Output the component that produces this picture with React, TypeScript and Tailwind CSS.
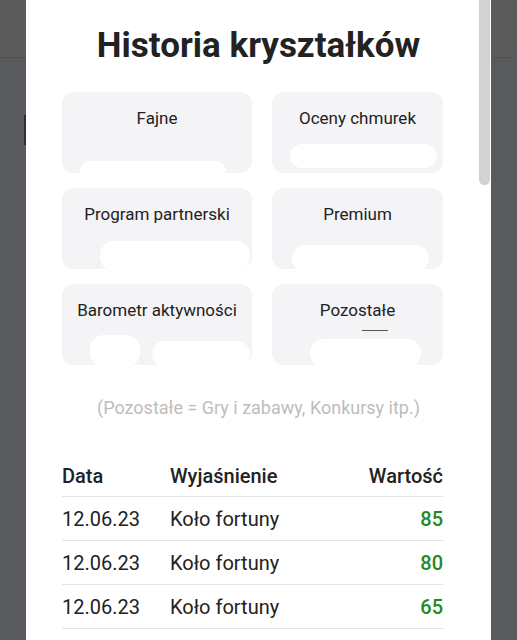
const cards = [
  { label: "Fajne", blobs: ["left-[18px] right-[26px] -bottom-[8px] h-[20px]"] },
  { label: "Oceny chmurek", blobs: ["left-[18px] right-[6px] bottom-[5px] h-[24px]"] },
  { label: "Program partnerski", blobs: ["left-[38px] right-[2px] -bottom-[2px] h-[30px]"] },
  { label: "Premium", blobs: ["left-[20px] right-[14px] -bottom-[2px] h-[26px]"] },
  { label: "Barometr aktywności", blobs: ["left-[28px] w-[50px] -bottom-[2px] h-[32px]", "left-[90px] right-[2px] -bottom-[2px] h-[26px]"] },
  { label: "Pozostałe", blobs: ["left-[38px] right-[22px] -bottom-[2px] h-[28px]"] },
];

const rows = [
  { date: "12.06.23", text: "Koło fortuny", value: 85 },
  { date: "12.06.23", text: "Koło fortuny", value: 80 },
  { date: "12.06.23", text: "Koło fortuny", value: 65 },
];

export default function App() {
  return (
    <div className="relative h-[640px] w-[517px] overflow-hidden bg-[#595a5d] font-['Roboto',sans-serif]">
      {/* page behind the overlay */}
      <div className="h-[58px] border-b border-[#525252] bg-[#5b5b5b]" />
      <div className="absolute left-[24px] top-[115px] h-[30px] w-[3px] bg-[#2f2f2f]" />

      {/* modal */}
      <div className="absolute left-[26px] top-0 h-[700px] w-[465px] bg-white">
        <div className="absolute right-[1px] top-0 h-[185px] w-[11px] rounded-b-full bg-[#d2d2d2]" />

        <h1 className="pt-[25px] text-center text-[35px] font-bold leading-[42px] text-[#222]">
          Historia kryształków
        </h1>

        <div className="mt-[25px] grid grid-cols-[190px_171px] gap-x-[20px] gap-y-[15px] pl-[36px]">
          {cards.map((c) => (
            <div key={c.label} className="relative h-[81px] rounded-[12px] bg-[#f4f4f6] pt-[15px]">
              <div className="text-center text-[17px] leading-[22px] text-[#222]">{c.label}</div>
              {c.blobs.map((b, i) => (
                <div key={i} className={`absolute rounded-[14px] bg-white ${b}`} />
              ))}
              {c.label === "Pozostałe" && (
                <div className="absolute left-[90px] top-[46px] h-[1px] w-[26px] bg-[#555]" />
              )}
            </div>
          ))}
        </div>

        <p className="mt-[31px] text-center text-[18px] leading-[24px] text-[#bdbdbd]">
          (Pozostałe = Gry i zabawy, Konkursy itp.)
        </p>

        <div className="ml-[36px] mr-[48px] mt-[43px]">
          <div className="grid h-[34px] grid-cols-[108px_1fr_auto] items-center border-b border-[#e3e5ea] pb-[8px] text-[20px] font-medium leading-[24px] text-[#222]">
            <span>Data</span>
            <span>Wyjaśnienie</span>
            <span className="text-right">Wartość</span>
          </div>
          {rows.map((r, i) => (
            <div
              key={i}
              className="grid h-[44px] grid-cols-[108px_1fr_auto] items-center border-b border-[#e3e5ea] text-[20px] leading-[24px] text-[#222]"
            >
              <span>{r.date}</span>
              <span>{r.text}</span>
              <span className="text-right font-medium text-[#1f8a22]">{r.value}</span>
            </div>
          ))}
        </div>
      </div>
    </div>
  );
}
